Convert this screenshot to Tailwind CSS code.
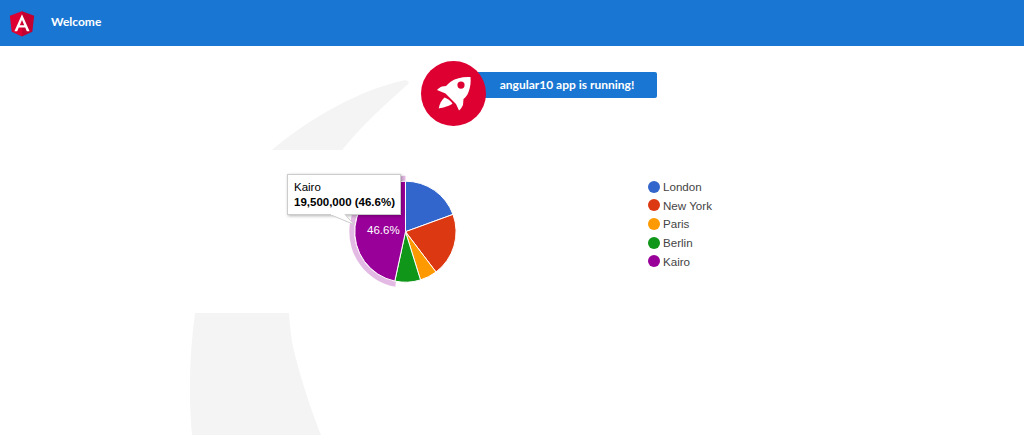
<!DOCTYPE html>
<html>
<head>
<meta charset="utf-8">
<script src="https://cdn.jsdelivr.net/npm/@tailwindcss/browser@4"></script>
</head>
<body class="bg-white overflow-hidden">
<div class="relative w-[1024px] h-[435px] overflow-hidden font-['Lato',sans-serif]">
  <svg class="absolute left-0 top-0" width="1024" height="435" viewBox="0 0 1024 435">
    <path fill="#f4f4f4" d="M403 80.500C409 79.500 410 83 407 85C385 105 362 125 343 149C318 185 285 270 289 313C290 330 293 347 293 347C301 380 311 410 321 435L192 435C188 390 190 350 195 313C205 240 240 180 273 149C310 118 360 90 403 80.500Z"/>
  </svg>
  <div class="relative flex flex-col">
    <header class="h-[46px] bg-[#1976d2] flex items-center pl-[9px] gap-[16px]">
      <svg width="26" height="29" viewBox="0 0 250 250">
        <polygon fill="#dd0031" points="125,8 8,50 26,204 125,250"/>
        <polygon fill="#c3002f" points="125,8 242,50 224,204 125,250"/>
        <path fill="#fff" d="M125 36L52 200h27l15-37h62l15 37h27L125 36zm21 105h-42l21-50 21 50z"/>
      </svg>
      <span class="text-white text-[12px] font-bold pb-[2px]">Welcome</span>
    </header>
    <div class="h-[104px] pt-[26px] pl-[432px]">
      <div class="relative w-[225px] h-[26px]">
        <div class="absolute left-[-11px] top-[-11px] w-[65px] h-[65px] rounded-full bg-[#dd0031] z-10">
          <svg class="absolute left-0 top-0" width="65" height="65" viewBox="421 61 65 65">
            <path fill="#fff" fill-rule="evenodd" d="M470.500 77C463 76.500 456 78 451 81.500C449 83 447.500 84.500 446 86L442 86.500C440.500 87 438 88.500 437 90L445.500 93.500L456 104L459 110.500C460.500 109.500 462 107 463 105L463.500 99C465.500 97.500 467.500 95 468.500 92C470.500 87 471 82 470.500 77ZM461 81.500A3.600 3.600 0 1 1 461 88.700A3.600 3.600 0 1 1 461 81.500Z"/>
            <path fill="#fff" d="M444.500 97.500C441.500 100 439.500 104 438.700 108.500C443.500 107.500 449.500 106 452.500 103.500C450.500 100.500 447.500 98.500 444.500 97.500Z"/>
          </svg>
        </div>
        <div class="w-full h-full bg-[#1976d2] rounded-[2px] flex items-center justify-center pl-[46px] pr-[1px] text-white text-[12px] font-bold">angular10 app is running!</div>
      </div>
    </div>
    <section class="relative h-[163px] bg-white">
      <svg class="absolute left-[340px] top-[20px]" width="130" height="125" viewBox="340 170 130 125">
        <path d="M405.500 175.700A56 56 0 0 0 395.300 286.800L396 281A50 50 0 0 1 405.500 181.700Z" fill="#990099" fill-opacity="0.27"/>
        <g stroke="#fff" stroke-width="1">
          <path fill="#3366cc" d="M405.500 231.700L405.500 181.200A50.500 50.500 0 0 1 453 214.400Z"/>
          <path fill="#dc3912" d="M405.500 231.700L453 214.400A50.500 50.500 0 0 1 436 272Z"/>
          <path fill="#ff9900" d="M405.500 231.700L436 272A50.500 50.500 0 0 1 420.500 279.900Z"/>
          <path fill="#109618" d="M405.500 231.700L420.500 279.900A50.500 50.500 0 0 1 394.800 281.100Z"/>
          <path fill="#990099" d="M405.500 231.700L394.800 281.100A50.500 50.500 0 0 1 405.500 181.200Z"/>
        </g>
        <text x="367" y="233.500" fill="#fff" font-size="11.500" class="font-['Liberation_Sans',sans-serif]">46.6%</text>
      </svg>
      <div class="absolute left-[287px] top-[24px] w-[114px] h-[41px] bg-white border border-[#ccc] shadow-[1px_1px_3px_rgba(0,0,0,0.3)] pl-[6px] pt-[5px] font-['Liberation_Sans',sans-serif] text-[11.500px] leading-[14px] text-black z-10">
        <div>Kairo</div>
        <div class="font-bold mt-[1px] whitespace-nowrap">19,500,000 (46.6%)</div>
      </div>
      <svg class="absolute left-[328px] top-[63px] z-20" width="30" height="16" viewBox="0 0 30 16">
        <path d="M2 1.500L26 11.500L17 1.500" fill="#fff" stroke="#ccc" stroke-width="1"/>
        <rect x="3" y="0" width="13.500" height="2" fill="#fff"/>
      </svg>
      <ul class="absolute left-[648px] top-[30px] flex flex-col gap-[5.700px] font-['Liberation_Sans',sans-serif] text-[11.600px] leading-[13px] text-[#444]">
        <li class="flex items-center gap-[3px]"><span class="w-[12px] h-[12px] rounded-full bg-[#3366cc]"></span>London</li>
        <li class="flex items-center gap-[3px]"><span class="w-[12px] h-[12px] rounded-full bg-[#dc3912]"></span>New York</li>
        <li class="flex items-center gap-[3px]"><span class="w-[12px] h-[12px] rounded-full bg-[#ff9900]"></span>Paris</li>
        <li class="flex items-center gap-[3px]"><span class="w-[12px] h-[12px] rounded-full bg-[#109618]"></span>Berlin</li>
        <li class="flex items-center gap-[3px]"><span class="w-[12px] h-[12px] rounded-full bg-[#990099]"></span>Kairo</li>
      </ul>
    </section>
  </div>
</div>
</body>
</html>
